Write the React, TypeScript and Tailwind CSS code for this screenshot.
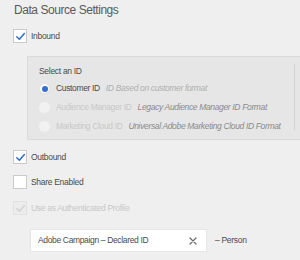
import React from 'react';

const Check = ({ color }: { color: string }) => (
  <svg width="11" height="11" viewBox="0 0 12 12" fill="none">
    <path d="M2 6.3 L4.8 9 L10.2 2.8" stroke={color} strokeWidth="1.7" strokeLinecap="round" strokeLinejoin="round" />
  </svg>
);

const CheckRow = ({ label, checked, disabled, className }: { label: string; checked?: boolean; disabled?: boolean; className?: string }) => (
  <div className={`flex items-center h-[14px] pl-[13px] ${className ?? ''}`}>
    <span
      className={`w-[14px] h-[14px] flex items-center justify-center border ${
        disabled ? 'bg-[#ececec] border-[#e2e2e2]' : 'bg-white border-[#cacaca]'
      }`}
    >
      {checked && <Check color={disabled ? '#d2d2d2' : '#2f6fd1'} />}
    </span>
    <span className={`ml-[4px] text-[8.5px] tracking-[-0.3px] ${disabled ? 'text-[#c8c8c8]' : 'text-[#4b4b4b]'}`}>{label}</span>
  </div>
);

const RadioRow = ({ label, desc, selected, disabled }: { label: string; desc: string; selected?: boolean; disabled?: boolean }) => (
  <div className="flex items-center h-[19px] text-[8.5px] tracking-[-0.35px] whitespace-nowrap">
    <span
      className={`w-[11px] h-[11px] rounded-full flex items-center justify-center ${
        disabled ? 'bg-[#f1f1f1]' : 'bg-white border border-[#e0e0e0]'
      }`}
    >
      {selected && <span className="w-[6px] h-[6px] rounded-full bg-[#2f6fd1]" />}
    </span>
    <span className={`ml-[6px] ${disabled ? 'text-[#c8c8c8]' : 'text-[#4b4b4b]'}`}>{label}</span>
    <span className={`ml-[6px] italic ${disabled ? 'text-[#8a8a8a]' : 'text-[#b0b0b0]'}`}>{desc}</span>
  </div>
);

export default function App() {
  return (
    <div className="w-[300px] h-[260px] overflow-hidden bg-[#efefef] font-['Liberation_Sans',Arial,sans-serif] text-[#4b4b4b]">
      <div className="pl-[14px] h-[21px] leading-[21px] text-[12px] tracking-[-0.45px] text-[#5a5a5a]">Data Source Settings</div>

      <CheckRow label="Inbound" checked className="mt-[8px]" />

      <div className="mt-[13px] ml-[27px] h-[84px] flex bg-[#e6e6e6] border-y border-l border-[#dadada] pt-[7px] pb-[9px]">
        <div className="w-[267px] border-r border-[#d2d2d2] pl-[11px]">
          <div className="h-[14px] leading-[14px] text-[8.5px] tracking-[-0.3px] text-[#4b4b4b]">Select an ID</div>
          <div className="mt-[1px]">
            <RadioRow label="Customer ID" desc="ID Based on customer format" selected />
            <RadioRow label="Audience Manager ID" desc="Legacy Audience Manager ID Format" disabled />
            <RadioRow label="Marketing Cloud ID" desc="Universal Adobe Marketing Cloud ID Format" disabled />
          </div>
        </div>
      </div>

      <CheckRow label="Outbound" checked className="mt-[10px]" />
      <CheckRow label="Share Enabled" className="mt-[11px]" />
      <CheckRow label="Use as Authenticated Profile" checked disabled className="mt-[12px]" />

      <div className="mt-[14px] flex items-center">
        <div className="ml-[30px] w-[177px] h-[23px] bg-white border border-[#e6e6e6] flex items-center pl-[7px] pr-[9px]">
          <span className="flex-1 text-[8.5px] tracking-[-0.35px] text-[#4b4b4b] whitespace-nowrap">Adobe Campaign – Declared ID</span>
          <svg width="8" height="8" viewBox="0 0 8 8">
            <path d="M1 1 L7 7 M7 1 L1 7" stroke="#6b6b6b" strokeWidth="1.2" strokeLinecap="round" />
          </svg>
        </div>
        <span className="ml-[8px] text-[8.5px] tracking-[-0.3px] text-[#4b4b4b]">– Person</span>
      </div>
    </div>
  );
}
